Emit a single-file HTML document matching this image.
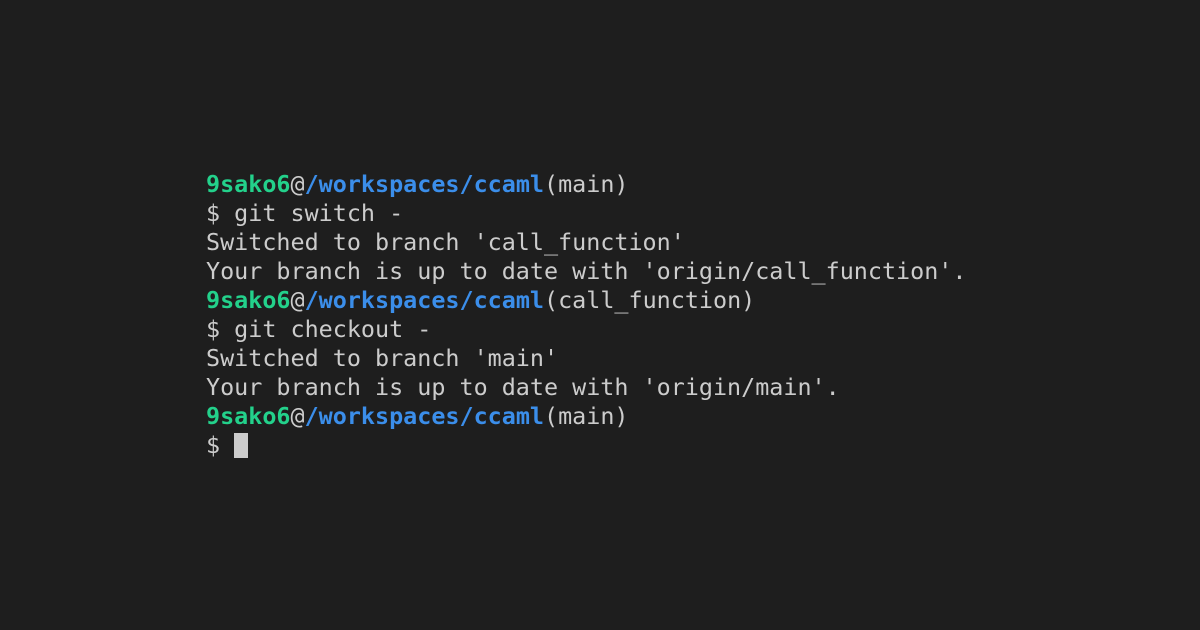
<!DOCTYPE html>
<html><head><style>
html,body{margin:0;padding:0;background:#1e1e1e;width:1200px;height:630px;overflow:hidden}
pre{position:absolute;left:206px;top:170px;margin:0;font-family:"DejaVu Sans Mono","Liberation Mono",monospace;font-size:23.4px;line-height:29px;color:#cccccc}
.g{color:#23d18b;font-weight:bold}.b{color:#3b8eea;font-weight:bold}
.c{display:inline-block;width:14px;height:25px;background:#cccccc;vertical-align:-5px}
</style></head><body>
<pre><span class="g">9sako6</span>@<span class="b">/workspaces/ccaml</span>(main)
$ git switch -
Switched to branch 'call_function'
Your branch is up to date with 'origin/call_function'.
<span class="g">9sako6</span>@<span class="b">/workspaces/ccaml</span>(call_function)
$ git checkout -
Switched to branch 'main'
Your branch is up to date with 'origin/main'.
<span class="g">9sako6</span>@<span class="b">/workspaces/ccaml</span>(main)
$ <span class="c"></span></pre>
</body></html>
